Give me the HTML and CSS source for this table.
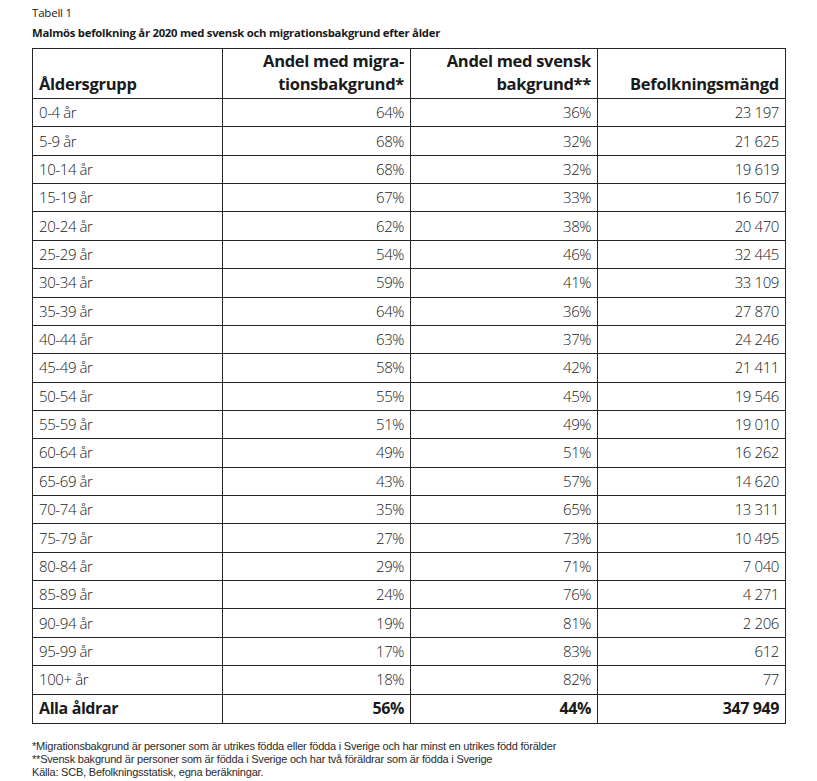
FILE: index.html
```html
<!DOCTYPE html>
<html lang="sv">
<head>
<meta charset="utf-8">
<title>Tabell 1</title>
<link rel="stylesheet" href="styles.css">
</head>
<body>
<div class="page">
  <p class="label">Tabell 1</p>
  <p class="caption">Malmös befolkning år 2020 med svensk och migrationsbakgrund efter ålder</p>
  <table class="data">
    <colgroup>
      <col class="c1"><col class="c2"><col class="c3"><col class="c4">
    </colgroup>
    <thead>
      <tr>
        <th class="left">Åldersgrupp</th>
        <th>Andel med migra-<br>tionsbakgrund*</th>
        <th>Andel med svensk<br>bakgrund**</th>
        <th>Befolkningsmängd</th>
      </tr>
    </thead>
    <tbody>
      <tr><td>0-4 år</td><td>64%</td><td>36%</td><td>23 197</td></tr>
      <tr><td>5-9 år</td><td>68%</td><td>32%</td><td>21 625</td></tr>
      <tr><td>10-14 år</td><td>68%</td><td>32%</td><td>19 619</td></tr>
      <tr><td>15-19 år</td><td>67%</td><td>33%</td><td>16 507</td></tr>
      <tr><td>20-24 år</td><td>62%</td><td>38%</td><td>20 470</td></tr>
      <tr><td>25-29 år</td><td>54%</td><td>46%</td><td>32 445</td></tr>
      <tr><td>30-34 år</td><td>59%</td><td>41%</td><td>33 109</td></tr>
      <tr><td>35-39 år</td><td>64%</td><td>36%</td><td>27 870</td></tr>
      <tr><td>40-44 år</td><td>63%</td><td>37%</td><td>24 246</td></tr>
      <tr><td>45-49 år</td><td>58%</td><td>42%</td><td>21 411</td></tr>
      <tr><td>50-54 år</td><td>55%</td><td>45%</td><td>19 546</td></tr>
      <tr><td>55-59 år</td><td>51%</td><td>49%</td><td>19 010</td></tr>
      <tr><td>60-64 år</td><td>49%</td><td>51%</td><td>16 262</td></tr>
      <tr><td>65-69 år</td><td>43%</td><td>57%</td><td>14 620</td></tr>
      <tr><td>70-74 år</td><td>35%</td><td>65%</td><td>13 311</td></tr>
      <tr><td>75-79 år</td><td>27%</td><td>73%</td><td>10 495</td></tr>
      <tr><td>80-84 år</td><td>29%</td><td>71%</td><td>7 040</td></tr>
      <tr><td>85-89 år</td><td>24%</td><td>76%</td><td>4 271</td></tr>
      <tr><td>90-94 år</td><td>19%</td><td>81%</td><td>2 206</td></tr>
      <tr><td>95-99 år</td><td>17%</td><td>83%</td><td>612</td></tr>
      <tr><td>100+ år</td><td>18%</td><td>82%</td><td>77</td></tr>
    </tbody>
    <tfoot>
      <tr><td>Alla åldrar</td><td>56%</td><td>44%</td><td>347 949</td></tr>
    </tfoot>
  </table>
  <div class="notes">
    <p>*Migrationsbakgrund är personer som är utrikes födda eller födda i Sverige och har minst en utrikes född förälder</p>
    <p>**Svensk bakgrund är personer som är födda i Sverige och har två föräldrar som är födda i Sverige</p>
    <p>Källa: SCB, Befolkningsstatisk, egna beräkningar.</p>
  </div>
</div>
</body>
</html>
```
FILE: styles.css
```css
html, body {
  margin: 0;
  padding: 0;
  background: #ffffff;
}

body {
  font-family: "Open Sans", "Noto Sans", "DejaVu Sans", sans-serif;
  color: #1a1a1a;
}

.page {
  padding: 5px 32px 0 32px;
}

.label {
  margin: 0;
  font-size: 11.5px;
  line-height: 15px;
  letter-spacing: -0.2px;
}

.caption {
  margin: 5px 0 0 0;
  font-size: 11.3px;
  line-height: 15px;
  font-weight: 700;
  letter-spacing: -0.25px;
}

.data {
  margin-top: 8px;
  width: 753px;
  border-collapse: collapse;
  table-layout: fixed;
}

.c1 { width: 190px; }
.c2 { width: 188px; }
.c3 { width: 187px; }
.c4 { width: 188px; }

.data th,
.data td {
  border: 1px solid #262626;
  padding: 0 6px 0 6px;
}

.data th {
  height: 46px;
  vertical-align: bottom;
  text-align: right;
  font-size: 16.5px;
  line-height: 23px;
  font-weight: 700;
  letter-spacing: -0.3px;
  padding-bottom: 3px;
}

.data th.left {
  text-align: left;
}

.data td {
  height: 26.36px;
  font-size: 15px;
  font-weight: 300;
  text-align: right;
  letter-spacing: -0.4px;
  line-height: 20px;
  padding-bottom: 1px;
}

.data td:first-child {
  text-align: left;
}

.data tfoot td {
  font-weight: 700;
  font-size: 16px;
  height: 27px;
}

.notes {
  margin-top: 16px;
  font-family: "Liberation Sans", "Open Sans", sans-serif;
  font-size: 11px;
  line-height: 13px;
  color: #2a2a2a;
  letter-spacing: -0.21px;
}

.notes p {
  margin: 0;
}
```
